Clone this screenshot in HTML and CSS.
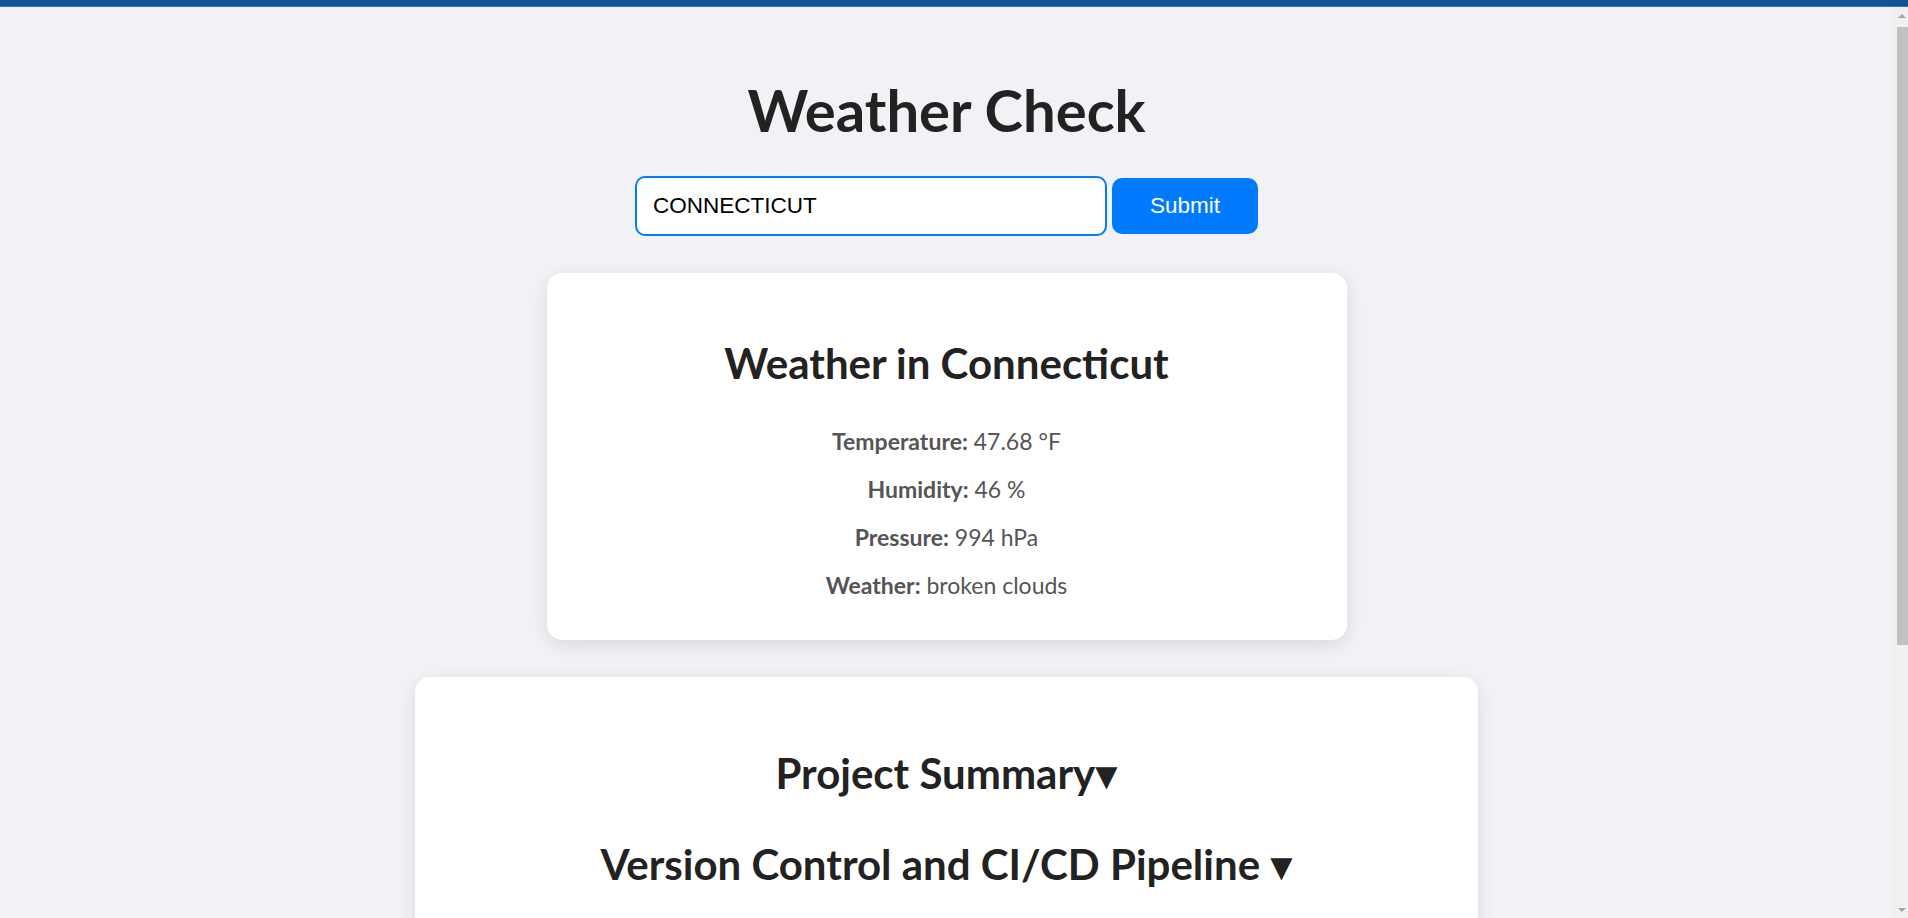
FILE: index.html
```html
<!DOCTYPE html>
<html lang="en">
<head>
<meta charset="utf-8">
<title>Weather Check</title>
<link rel="stylesheet" href="styles.css">
</head>
<body>
<div class="topbar"></div>
<div class="window">
  <div class="page">
    <main class="main">
      <h1 class="title">Weather Check</h1>
      <form class="search">
        <input class="search-input" type="text" value="CONNECTICUT">
        <button class="search-btn" type="button">Submit</button>
      </form>
      <section class="card weather-card">
        <h2 class="card-title">Weather in Connecticut</h2>
        <div class="details">
          <p class="detail"><strong>Temperature:</strong> 47.68 °F</p>
          <p class="detail"><strong>Humidity:</strong> 46 %</p>
          <p class="detail"><strong>Pressure:</strong> 994 hPa</p>
          <p class="detail"><strong>Weather:</strong> broken clouds</p>
        </div>
      </section>
      <section class="card summary-card">
        <h2 class="section-title">Project Summary<span class="caret">▼</span></h2>
        <h2 class="section-title">Version Control and CI/CD Pipeline <span class="caret">▼</span></h2>
      </section>
    </main>
  </div>
  <div class="scrollbar" aria-hidden="true">
    <div class="sb-btn"><span class="sb-arrow sb-up"></span></div>
    <div class="sb-track"><div class="sb-thumb"></div></div>
    <div class="sb-btn"><span class="sb-arrow sb-down"></span></div>
  </div>
</div>
</body>
</html>
```
FILE: styles.css
```css
html, body {
  margin: 0;
  height: 100%;
}

body {
  display: flex;
  flex-direction: column;
  overflow: hidden;
  font-family: Lato, "Open Sans", sans-serif;
  background: #f0f2f5;
}

.topbar {
  flex: 0 0 6px;
  background: #14539a;
  border-bottom: 1px solid #3e70ab;
}

.window {
  flex: 1 1 auto;
  display: flex;
  min-height: 0;
}

.page {
  flex: 1 1 auto;
  overflow: hidden;
  background: #f0f2f5;
}

/* classic scrollbar rail */
.scrollbar {
  flex: 0 0 15px;
  display: flex;
  flex-direction: column;
  background: #f0f0f0;
}

.sb-btn {
  flex: 0 0 17px;
  display: flex;
  align-items: center;
  justify-content: center;
  padding-left: 3px;
}

.sb-arrow {
  width: 0;
  height: 0;
  border-left: 4px solid transparent;
  border-right: 4px solid transparent;
}

.sb-up {
  border-bottom: 4px solid #a3a3a3;
}

.sb-down {
  border-top: 4px solid #a3a3a3;
}

.sb-track {
  flex: 1 1 auto;
  padding: 3px 0 0 4px;
}

.sb-thumb {
  height: 618px;
  background: #c1c1c1;
}

.main {
  display: flex;
  flex-direction: column;
  align-items: center;
  padding: 0 0 37px;
}

.title {
  margin: 67.5px 0 32px;
  font-size: 58px;
  line-height: 1.2;
  font-weight: 700;
  color: #222;
}

.search {
  display: flex;
  align-items: center;
  gap: 5px;
  margin: 0 0 37px;
}

.search-input {
  box-sizing: border-box;
  width: 472px;
  height: 60px;
  padding: 0 16px;
  border: 2px solid #007bff;
  border-radius: 10px;
  outline: none;
  background: #fff;
  font-family: "Liberation Sans", Arial, sans-serif;
  font-size: 22.5px;
  color: #000;
}

.search-btn {
  box-sizing: border-box;
  width: 146px;
  height: 56px;
  border: 0;
  border-radius: 10px;
  background: #007bff;
  color: #fff;
  font-family: "Liberation Sans", Arial, sans-serif;
  font-size: 22.5px;
}

.card {
  box-sizing: border-box;
  background: #fff;
  border-radius: 15px;
  box-shadow: 0 5px 18px rgba(0, 0, 0, 0.1);
  text-align: center;
}

.weather-card {
  width: 800px;
  padding: 32px 40px 40px;
  margin-bottom: 37px;
}

.card-title {
  margin: 33px 0 38px;
  font-size: 42px;
  line-height: 1.2;
  font-weight: 700;
  color: #222;
}

.details {
  display: flex;
  flex-direction: column;
  gap: 18px;
}

.detail {
  margin: 0;
  font-size: 23px;
  line-height: 30px;
  color: #555;
}

.summary-card {
  width: 1063px;
  min-height: 590px;
  padding: 32px 40px;
}

.section-title {
  margin: 39px 0 40.6px;
  font-size: 42px;
  line-height: 1.2;
  font-weight: 700;
  color: #222;
}

.caret {
  font-family: "DejaVu Sans", sans-serif;
  font-size: 29px;
  vertical-align: 3px;
}
```
